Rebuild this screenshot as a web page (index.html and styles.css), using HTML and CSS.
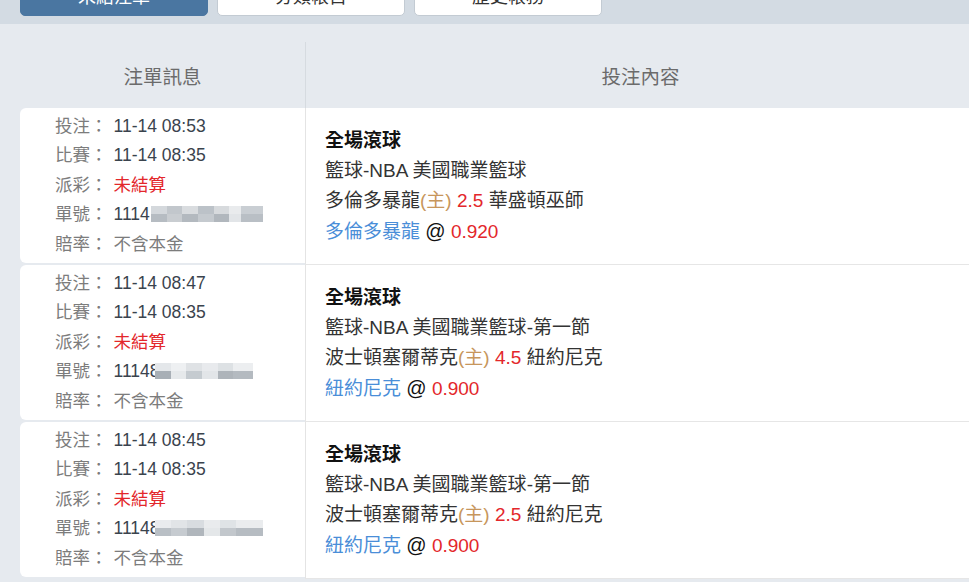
FILE: index.html
```html
<!DOCTYPE html>
<html lang="zh-TW">
<head>
    <meta charset="UTF-8">
    <meta name="viewport" content="width=device-width, initial-scale=1.0">
    <title>未結注單</title>
    <link rel="stylesheet" href="styles.css">
</head>
<body>
    <div class="topbar">
        <a class="tab active">未結注單</a>
        <a class="tab">分類帳目</a>
        <a class="tab">歷史帳務</a>
    </div>

    <div class="bets">
        <div class="head">
            <div class="head-cell info-head">注單訊息</div>
            <div class="head-cell content-head">投注內容</div>
        </div>

        <!-- 注單 1 -->
        <div class="row">
            <div class="info">
                <div class="card">
                    <div><span class="key">投注：</span><span class="val">11-14 08:53</span></div>
                    <div><span class="key">比賽：</span><span class="val">11-14 08:35</span></div>
                    <div><span class="key">派彩：</span><span class="red">未結算</span></div>
                    <div><span class="key">單號：</span><span class="val">1114</span><span class="mask mask-a"></span></div>
                    <div><span class="key">賠率：</span><span class="label">不含本金</span></div>
                </div>
            </div>
            <div class="content">
                <div class="title">全場滾球</div>
                <div>籃球-NBA 美國職業籃球</div>
                <div>多倫多暴龍<span class="home">(主)</span> <span class="red">2.5</span> 華盛頓巫師</div>
                <div><span class="pick">多倫多暴龍</span> <span class="at">@</span> <span class="red">0.920</span></div>
            </div>
        </div>

        <!-- 注單 2 -->
        <div class="row">
            <div class="info">
                <div class="card">
                    <div><span class="key">投注：</span><span class="val">11-14 08:47</span></div>
                    <div><span class="key">比賽：</span><span class="val">11-14 08:35</span></div>
                    <div><span class="key">派彩：</span><span class="red">未結算</span></div>
                    <div><span class="key">單號：</span><span class="val">11148</span><span class="mask mask-b"></span></div>
                    <div><span class="key">賠率：</span><span class="label">不含本金</span></div>
                </div>
            </div>
            <div class="content">
                <div class="title">全場滾球</div>
                <div>籃球-NBA 美國職業籃球-第一節</div>
                <div>波士頓塞爾蒂克<span class="home">(主)</span> <span class="red">4.5</span> 紐約尼克</div>
                <div><span class="pick">紐約尼克</span> <span class="at">@</span> <span class="red">0.900</span></div>
            </div>
        </div>

        <!-- 注單 3 -->
        <div class="row">
            <div class="info">
                <div class="card">
                    <div><span class="key">投注：</span><span class="val">11-14 08:45</span></div>
                    <div><span class="key">比賽：</span><span class="val">11-14 08:35</span></div>
                    <div><span class="key">派彩：</span><span class="red">未結算</span></div>
                    <div><span class="key">單號：</span><span class="val">11148</span><span class="mask mask-c"></span></div>
                    <div><span class="key">賠率：</span><span class="label">不含本金</span></div>
                </div>
            </div>
            <div class="content">
                <div class="title">全場滾球</div>
                <div>籃球-NBA 美國職業籃球-第一節</div>
                <div>波士頓塞爾蒂克<span class="home">(主)</span> <span class="red">2.5</span> 紐約尼克</div>
                <div><span class="pick">紐約尼克</span> <span class="at">@</span> <span class="red">0.900</span></div>
            </div>
        </div>
    </div>
</body>
</html>
```

FILE: styles.css
```css
body {
    margin: 0;
    padding: 0;
    font-family: 'Liberation Sans', 'Noto Sans CJK TC', sans-serif;
    background: #e6eaef;
    color: #333;
    overflow: hidden;
}

/* 上方分頁 */
.topbar {
    height: 24px;
    box-sizing: border-box;
    padding: 0 0 8px 20px;
    background: #d3dbe3;
    border-left: 3px solid #e2e6ea;
    margin-left: -3px;
    display: flex;
    align-items: flex-end;
    gap: 9px;
    overflow: hidden;
}

.tab {
    flex: none;
    width: 188px;
    height: 40px;
    line-height: 40px;
    box-sizing: border-box;
    text-align: center;
    font-size: 18px;
    border-radius: 5px;
    background: #fff;
    color: #333;
    border: 1px solid #c3cbd3;
}

.tab.active {
    background: #4a76a1;
    border-color: #4a76a1;
    color: #fff;
}

/* 注單表格 */
.bets {
    width: 975px;
}

.head {
    height: 84px;
    display: grid;
    grid-template-columns: 305px 1fr;
    color: #6b6b6b;
    font-size: 19.5px;
}

.head-cell {
    margin-top: 18px;
    display: flex;
    align-items: center;
    justify-content: center;
}

.info-head {
    padding-left: 20px;
}

.content-head {
    border-left: 1px solid #d6dbe0;
}

.row {
    height: 157px;
    display: grid;
    grid-template-columns: 305px 1fr;
}

.info {
    padding: 0 0 2px 20px;
    display: flex;
}

.card {
    flex: 1;
    background: #fff;
    border-radius: 6px 0 0 6px;
    padding-left: 35px;
    font-size: 17.5px;
    line-height: 29.6px;
    display: flex;
    flex-direction: column;
    justify-content: center;
}

.key {
    color: #7c7c7c;
    margin-right: 6px;
}

.label {
    color: #7c7c7c;
}

.val {
    color: #3a434d;
}

.red {
    color: #e3272b;
}

/* 打碼的單號 */
.mask {
    display: inline-block;
    height: 16px;
    vertical-align: -2px;
    background-repeat: no-repeat;
    background-size: 100% 8px, 100% 8px;
    background-position: 0 0, 0 8px;
}

.mask-a {
    width: 112px;
    margin-left: 1px;
    background-image:
        linear-gradient(90deg, #d4d8dc 0 14%, #c2c7cc 14% 28%, #d9dcdf 28% 42%, #bcc2c8 42% 56%, #d7dadd 56% 70%, #e9ebed 70% 80%, #c9ced3 80% 100%),
        linear-gradient(90deg, #b6bcc2 0 14%, #c9cdd1 14% 28%, #b3b9bf 28% 42%, #c5cacf 42% 56%, #b1b7bd 56% 70%, #e2e5e8 70% 80%, #b9bfc5 80% 100%);
}

.mask-b {
    width: 98px;
    margin-left: -5px;
    background-image:
        linear-gradient(90deg, #e4e7ea 0 16%, #eef0f2 16% 32%, #dfe2e5 32% 48%, #e8eaed 48% 64%, #dde1e4 64% 80%, #eceef0 80% 100%),
        linear-gradient(90deg, #a8afb6 0 16%, #e6e9eb 16% 32%, #c5cbd0 32% 48%, #e2e5e8 48% 64%, #aeb4ba 64% 80%, #b4bac0 80% 100%);
}

.mask-c {
    width: 108px;
    margin-left: -5px;
    background-image:
        linear-gradient(90deg, #e9ebee 0 15%, #e1e4e7 15% 30%, #d8dce0 30% 45%, #e9ebed 45% 60%, #dfe3e6 60% 75%, #eaecee 75% 100%),
        linear-gradient(90deg, #b9bfc5 0 15%, #c6cbd0 15% 30%, #b0b6bc 30% 45%, #e4e7e9 45% 60%, #c2c7cc 60% 75%, #b6bcc2 75% 100%);
}

.content {
    background: #fff;
    border-left: 1px solid #e4e4e4;
    border-bottom: 1px solid #e6e6e6;
    padding-left: 19px;
    font-size: 19px;
    line-height: 30px;
    display: flex;
    flex-direction: column;
    justify-content: center;
}

.title {
    font-weight: bold;
    color: #111;
}

.home {
    color: #c7965c;
}

.pick {
    color: #4a8ed8;
}

.at {
    color: #111;
    font-size: 20px;
}
```
